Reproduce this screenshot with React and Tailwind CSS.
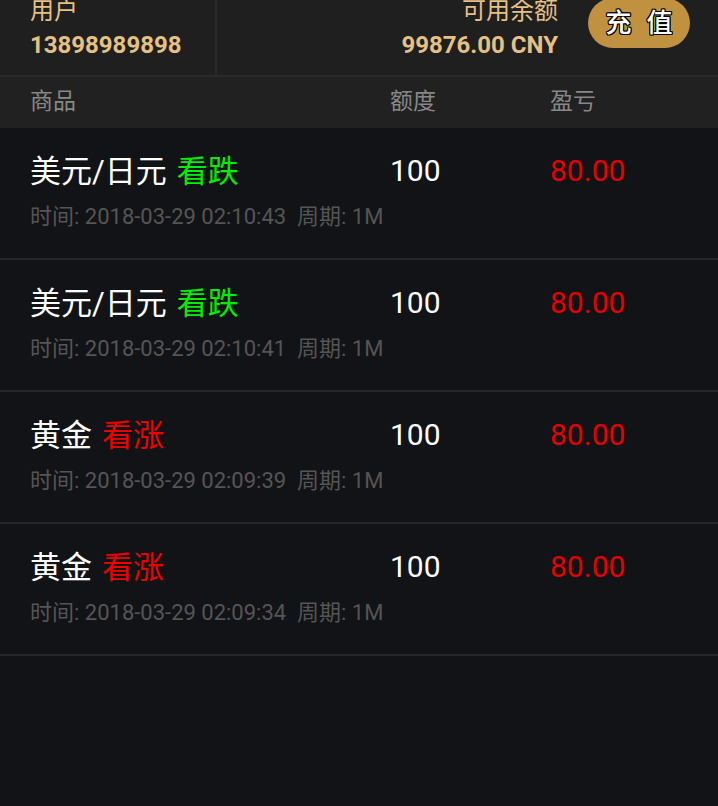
import React from "react";

const font = { fontFamily: "Roboto, 'Noto Sans CJK SC', sans-serif" };

const rows = [
  { name: "美元/日元", dir: "看跌", up: false, time: "2018-03-29 02:10:43" },
  { name: "美元/日元", dir: "看跌", up: false, time: "2018-03-29 02:10:41" },
  { name: "黄金", dir: "看涨", up: true, time: "2018-03-29 02:09:39" },
  { name: "黄金", dir: "看涨", up: true, time: "2018-03-29 02:09:34" },
];

export default function App() {
  return (
    <div
      className="w-[718px] h-[806px] bg-[#121316] overflow-hidden flex flex-col"
      style={font}
    >
      {/* header */}
      <div className="h-[75px] bg-[#1f1f1f] flex shrink-0">
        <div className="w-[217px] border-r-2 border-[#2a2a2a] pl-[30px] flex flex-col">
          <div className="text-[24px] leading-[24px] text-[#e5c183] -mt-[1px]">用户</div>
          <div className="text-[24px] leading-[24px] font-bold text-[#e5c183] mt-[10px]">13898989898</div>
        </div>
        <div className="flex-1 flex justify-end pr-[28px]">
          <div className="flex flex-col items-end">
            <div className="text-[24px] leading-[24px] text-[#e5c183] -mt-[1px]">可用余额</div>
            <div className="text-[24px] leading-[24px] font-bold text-[#e5c183] mt-[10px]">99876.00 CNY</div>
          </div>
          <div className="ml-[30px] w-[102px] h-[50px] -mt-[2px] rounded-full bg-[#c0913f] flex items-center justify-center">
            <span
              className="text-[26px] leading-none text-white font-medium tracking-[15px] pl-[15px] [text-shadow:1px_1px_0_#000,-1px_-1px_0_#000,1px_-1px_0_#000,-1px_1px_0_#000,0_1px_0_#000,0_-1px_0_#000,1px_0_0_#000,-1px_0_0_#000]"
            >
              充值
            </span>
          </div>
        </div>
      </div>
      <div className="h-[2px] bg-[#2a2a2a] shrink-0" />
      {/* column header */}
      <div className="h-[51px] bg-[#212121] flex items-center text-[23px] text-[#888888] shrink-0">
        <div className="w-[390px] pl-[30px]">商品</div>
        <div className="w-[160px]">额度</div>
        <div>盈亏</div>
      </div>
      {/* list */}
      <div className="flex flex-col">
        {rows.map((r, i) => (
          <div key={i} className="h-[132px] border-b-2 border-[#25262a] flex flex-col pt-[25px]">
            <div className="flex items-center h-[36px]">
              <div className="w-[390px] pl-[30px] text-[31px] leading-none text-white whitespace-nowrap">
                {r.name}
                <span className={"ml-[10px] " + (r.up ? "text-[#ee0000]" : "text-[#00ee00]")}>{r.dir}</span>
              </div>
              <div className="w-[160px] text-[30px] leading-none text-white">100</div>
              <div className="text-[30px] leading-none text-[#e60000]">80.00</div>
            </div>
            <div className="pl-[30px] mt-[16px] text-[22px] leading-[24px] text-[#555555] whitespace-pre">
              {"时间: " + r.time + "  周期: 1M"}
            </div>
          </div>
        ))}
      </div>
    </div>
  );
}
